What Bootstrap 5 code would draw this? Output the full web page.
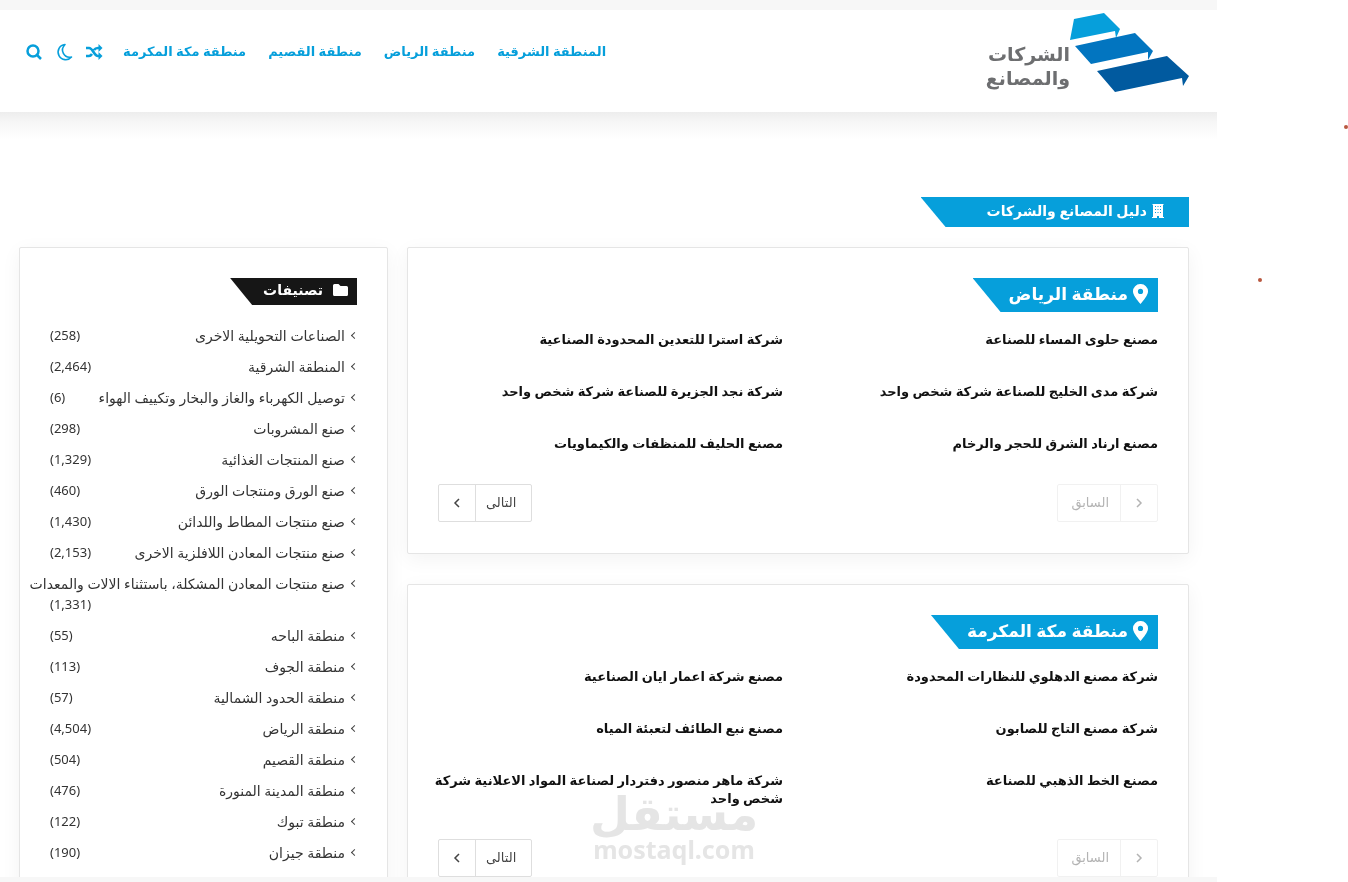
<!DOCTYPE html>
<html lang="ar" dir="rtl">
<head>
<meta charset="utf-8">
<meta name="viewport" content="width=device-width, initial-scale=1">
<title>دليل المصانع والشركات</title>
<link rel="stylesheet" href="https://cdn.jsdelivr.net/npm/bootstrap@5.3.0/dist/css/bootstrap.min.css">
<script src="https://cdn.jsdelivr.net/npm/bootstrap@5.3.0/dist/js/bootstrap.bundle.min.js" defer></script>
<style>
body{font-family:"Noto Sans","DejaVu Sans",sans-serif;background:#fff;overflow:hidden}
a{text-decoration:none;color:inherit}
.site{height:100vh;margin-right:131px;border-top:10px solid #f7f7f7;border-bottom:5px solid #f7f7f7}
.site-head{height:102px;padding:0 28px 0 25px;flex:none}
.logo-mark{margin-top:3px}
.brand-name{color:#6d6e70;font-size:19px;font-weight:700;line-height:24px;padding-top:32px}
.site-nav{font-size:13px;font-weight:700;color:#069fdb;height:84px}
.site-nav .menu{gap:22px;margin-left:20px}
.tools{gap:12px}
.tool{border:0;background:none;padding:0;color:inherit;width:18px;height:18px;line-height:0}
.head-shade{height:28px;background:linear-gradient(#ededed,#f6f6f6 35%,#fff);flex:none}
.content{padding:57px 28px 0 19px}
.ribbon{color:#fff;background:#069fdb;font-weight:700;margin:0;width:fit-content;display:flex;align-items:center}
.ribbon-page{height:30px;font-size:14px;padding:0 25px 2px 66px;gap:5px;clip-path:polygon(0 0,100% 0,100% 100%,25px 100%)}
.ribbon-area{height:34px;font-size:17px;padding:0 10px 2px 36px;gap:5px;clip-path:polygon(0 0,100% 0,100% 100%,28px 100%);margin-bottom:18px}
.ribbon-side{height:27px;font-size:14px;background:#161616;padding:0 9px 3px 33px;gap:10px;clip-path:polygon(0 0,100% 0,100% 100%,22px 100%);margin-bottom:20px}
.columns{display:grid;grid-template-columns:minmax(0,782fr) minmax(0,369fr);gap:19px;margin-top:20px}
.panel{border:1px solid #e5e5e5;border-radius:2px;padding:30px 30px 31px;background:#fff;box-shadow:0 5px 20px rgba(0,0,0,.05)}
.panel+.panel{margin-top:30px}
.firms{display:grid;grid-template-columns:repeat(2,minmax(0,1fr));gap:34px 30px;font-size:13px;line-height:18px;font-weight:700;color:#111;margin-bottom:32px}
.firms a{white-space:nowrap}
.pager{height:38px;border:1px solid #dedede;border-radius:2px;background:#fff;padding:0;font-size:13px;color:#444;display:flex;align-items:stretch}
.pager>span{display:flex;align-items:center;justify-content:center}
.pager .word{padding:0 15px 0 10px}
.pager .arrow{width:37px}
.pager.next .arrow{border-right:1px solid #dedede}
.pager.prev .arrow{border-left:1px solid #dedede}
.pager.prev .word{padding:0 11px 0 13px}
.pager:disabled{opacity:.4}
.cats{font-size:14px;line-height:21px;color:#333}
.cats li{display:flex;flex-wrap:wrap;margin-bottom:10px}
.cats a{white-space:nowrap}
.cats a::before{content:"";display:inline-block;width:5px;height:5px;border:solid #444;border-width:0 0 1px 1px;transform:rotate(45deg);margin-left:7px;vertical-align:3px}
.cats .count{margin-right:auto;font-size:13px}
.watermark{position:absolute;left:50%;bottom:20px;transform:translateX(-50%);color:#e5e5e5;font-weight:700;text-align:center;mix-blend-mode:multiply;pointer-events:none}
.watermark .w-ar{font-size:46px;line-height:48px}
.watermark .w-en{font-size:25px;line-height:26px;direction:ltr}
.speck{position:absolute;width:4px;height:4px;border-radius:2px;background:#b9583f}
.speck-a{right:0;top:125px}
.speck-b{right:86px;top:278px}
</style>
</head>
<body>
<div class="site d-flex flex-column overflow-hidden">
<header class="site-head d-flex justify-content-between">
<a href="#" class="d-flex">
<svg class="logo-mark" width="119" height="80" viewBox="0 0 119 80" aria-hidden="true">
<path fill="#069fdb" d="M4 6 34 0 50 16 46 25 45 18 0 27Z"/><path fill="#0275c0" d="M5 33 65 20 83 38 78 47 78 39 21 51Z"/><path fill="#015a9f" d="M27 58 97 43 119 63 113 73 112 65 45 79Z"/></svg>
<span class="brand-name">الشركات<br>والمصانع</span>
</a>
<nav class="site-nav d-flex align-items-center" aria-label="القائمة الرئيسية">
<div class="menu d-flex"><a href="#">المنطقة الشرقية</a><a href="#">منطقة الرياض</a><a href="#">منطقة القصيم</a><a href="#">منطقة مكة المكرمة</a></div>
<div class="tools d-flex">
<button class="tool" aria-label="عشوائي"><svg width="18" height="18" viewBox="0 0 18 18" fill="none" stroke="currentColor" stroke-width="2.6"><path d="M1 5h3c4 0 5 8 9 8h2M1 13h3c1.500 0 2.300-1 3-2M9 7c1-1.500 2-2 4-2h2"/><path fill="currentColor" stroke="none" d="M13.500 1 17.500 5l-4 4zM13.500 9l4 4-4 4z"/></svg></button>
<button class="tool" aria-label="الوضع المظلم"><svg width="18" height="18" viewBox="0 0 18 18" fill="none" stroke="currentColor" stroke-width="1.600" stroke-linejoin="round"><path d="M10 1.500A7.600 7.600 0 1 0 16.500 14C9 15.500 4.500 7 10 1.500Z"/></svg></button>
<button class="tool" aria-label="بحث"><svg width="18" height="18" viewBox="0 0 18 18" fill="none" stroke="currentColor" stroke-width="2.500"><circle cx="8" cy="8" r="5.500"/><path d="m12 12 4 4"/></svg></button>
</div>
</nav>
</header>
<div class="head-shade"></div>
<main class="content">
<h1 class="ribbon ribbon-page"><svg width="12" height="14" viewBox="0 0 12 14" fill="currentColor" aria-hidden="true"><path fill-rule="evenodd" d="M.5 0h11v1H11v12h1v1H7v-2H5v2H0v-1h1V1H.500zM3 2v1h1V2zm2.500 0v1h1V2zM8 2v1h1V2zM3 5v1h1V5zm2.500 0v1h1V5zM8 5v1h1V5zM3 8v1h1V8zm2.500 0v1h1V8zM8 8v1h1V8z"/></svg><span>دليل المصانع والشركات</span></h1>
<div class="columns">
<div>
<section class="panel">
<h2 class="ribbon ribbon-area"><svg width="15" height="20" viewBox="0 0 15 20" fill="currentColor" aria-hidden="true"><path fill-rule="evenodd" d="M7.500 0A7.300 7.300 0 0 0 0 7.500C0 11 4 16 7.500 20 11 16 15 11 15 7.500A7.300 7.300 0 0 0 7.500 0zm0 4.800a2.600 2.600 0 1 1 0 5.200 2.600 2.600 0 0 1 0-5.200z"/></svg><span>منطقة الرياض</span></h2>
<div class="firms"><a href="#">مصنع حلوى المساء للصناعة</a><a href="#">شركة استرا للتعدين المحدودة الصناعية</a><a href="#">شركة مدى الخليج للصناعة شركة شخص واحد</a><a href="#">شركة نجد الجزيرة للصناعة شركة شخص واحد</a><a href="#">مصنع ارناد الشرق للحجر والرخام</a><a href="#">مصنع الحليف للمنظفات والكيماويات</a></div>
<div class="d-flex justify-content-between">
<button class="pager prev" disabled><span class="arrow"><svg width="8" height="10" viewBox="0 0 8 10" fill="none" stroke="currentColor" stroke-width="1.500"><path d="m2 1 4 4-4 4"/></svg></span><span class="word">السابق</span></button>
<button class="pager next"><span class="word">التالى</span><span class="arrow"><svg width="8" height="10" viewBox="0 0 8 10" fill="none" stroke="currentColor" stroke-width="1.500"><path d="M6 1 2 5l4 4"/></svg></span></button>
</div>
</section>
<section class="panel">
<h2 class="ribbon ribbon-area"><svg width="15" height="20" viewBox="0 0 15 20" fill="currentColor" aria-hidden="true"><path fill-rule="evenodd" d="M7.500 0A7.300 7.300 0 0 0 0 7.500C0 11 4 16 7.500 20 11 16 15 11 15 7.500A7.300 7.300 0 0 0 7.500 0zm0 4.800a2.600 2.600 0 1 1 0 5.200 2.600 2.600 0 0 1 0-5.200z"/></svg><span>منطقة مكة المكرمة</span></h2>
<div class="firms"><a href="#">شركة مصنع الدهلوي للنظارات المحدودة</a><a href="#">مصنع شركة اعمار ايان الصناعية</a><a href="#">شركة مصنع التاج للصابون</a><a href="#">مصنع نبع الطائف لتعبئة المياه</a><a href="#">مصنع الخط الذهبي للصناعة</a><a href="#">شركة ماهر منصور دفتردار لصناعة المواد الاعلانية شركة<br>شخص واحد</a></div>
<div class="d-flex justify-content-between">
<button class="pager prev" disabled><span class="arrow"><svg width="8" height="10" viewBox="0 0 8 10" fill="none" stroke="currentColor" stroke-width="1.500"><path d="m2 1 4 4-4 4"/></svg></span><span class="word">السابق</span></button>
<button class="pager next"><span class="word">التالى</span><span class="arrow"><svg width="8" height="10" viewBox="0 0 8 10" fill="none" stroke="currentColor" stroke-width="1.500"><path d="M6 1 2 5l4 4"/></svg></span></button>
</div>
</section>
</div>
<aside class="panel mt-0">
<h2 class="ribbon ribbon-side"><svg width="15" height="12" viewBox="0 0 15 12" fill="currentColor" aria-hidden="true"><path d="M1.500 0h4L7.500 2h6A1.500 1.500 0 0 1 15 3.500v7a1.500 1.500 0 0 1-1.500 1.500h-12A1.500 1.500 0 0 1 0 10.500v-9A1.500 1.500 0 0 1 1.500 0z"/></svg><span>تصنيفات</span></h2>
<ul class="cats list-unstyled p-0 mb-0">
<li><a href="#">الصناعات التحويلية الاخرى</a><span class="count">(258)</span></li>
<li><a href="#">المنطقة الشرقية</a><span class="count">(2,464)</span></li>
<li><a href="#">توصيل الكهرباء والغاز والبخار وتكييف الهواء</a><span class="count">(6)</span></li>
<li><a href="#">صنع المشروبات</a><span class="count">(298)</span></li>
<li><a href="#">صنع المنتجات الغذائية</a><span class="count">(1,329)</span></li>
<li><a href="#">صنع الورق ومنتجات الورق</a><span class="count">(460)</span></li>
<li><a href="#">صنع منتجات المطاط واللدائن</a><span class="count">(1,430)</span></li>
<li><a href="#">صنع منتجات المعادن اللافلزية الاخرى</a><span class="count">(2,153)</span></li>
<li><a href="#">صنع منتجات المعادن المشكلة، باستثناء الالات والمعدات</a><span class="count">(1,331)</span></li>
<li><a href="#">منطقة الباحه</a><span class="count">(55)</span></li>
<li><a href="#">منطقة الجوف</a><span class="count">(113)</span></li>
<li><a href="#">منطقة الحدود الشمالية</a><span class="count">(57)</span></li>
<li><a href="#">منطقة الرياض</a><span class="count">(4,504)</span></li>
<li><a href="#">منطقة القصيم</a><span class="count">(504)</span></li>
<li><a href="#">منطقة المدينة المنورة</a><span class="count">(476)</span></li>
<li><a href="#">منطقة تبوك</a><span class="count">(122)</span></li>
<li><a href="#">منطقة جيزان</a><span class="count">(190)</span></li>
</ul>
</aside>
</div>
</main>
</div>
<div class="watermark"><div class="w-ar">مستقل</div><div class="w-en">mostaql.com</div></div>
<span class="speck speck-a"></span><span class="speck speck-b"></span>
</body>
</html>
